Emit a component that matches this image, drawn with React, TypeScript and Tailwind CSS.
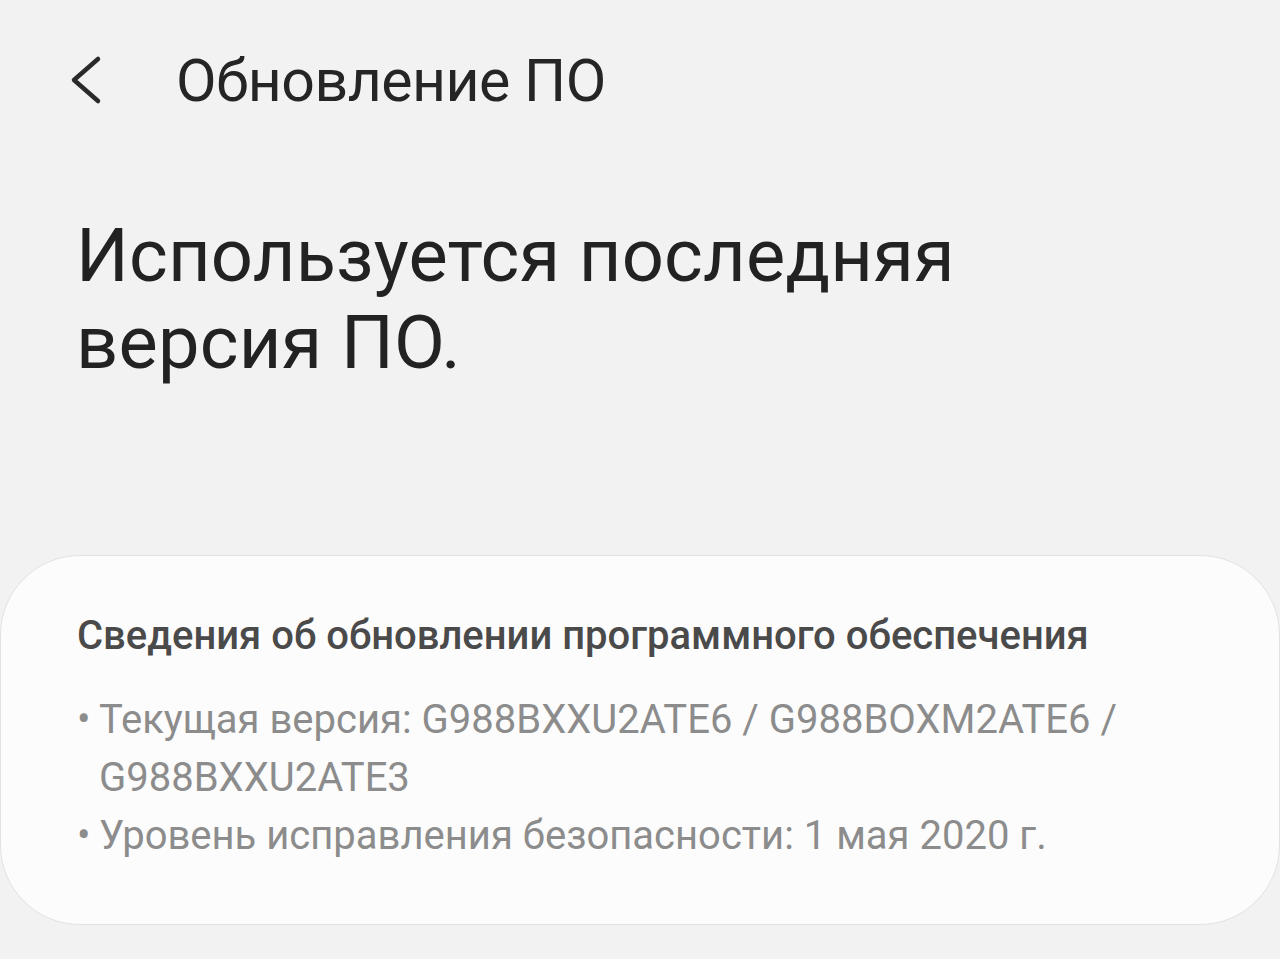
import React from "react";

// Software update screen (One UI style)
const App: React.FC = () => {
  return (
    <div
      className="w-[1280px] h-[959px] bg-[#f2f2f2] overflow-hidden flex flex-col"
      style={{ fontFamily: "Roboto, 'Noto Sans', sans-serif" }}
    >
      <div className="flex items-center h-[80px] mt-[40px] pl-[68px]">
        <svg width="34" height="50" viewBox="0 0 34 50" className="shrink-0">
          <path d="M30 4 L6 25 L30 46" fill="none" stroke="#2a2a2a" strokeWidth="4.5" strokeLinecap="round" strokeLinejoin="round" />
        </svg>
        <span className="ml-[74px] text-[59px] leading-none text-[#252525] tracking-[-0.5px]">Обновление ПО</span>
      </div>

      <h1 className="mt-[92px] pl-[76px] text-[74px] leading-[87px] text-[#222222] tracking-[0.2px]">
        Используется последняя
        <br />
        версия ПО.
      </h1>

      <div className="mt-[169px] mx-0 h-[370px] rounded-[80px] bg-[#fcfcfc] border border-[#e2e2e2] pl-[76px] pr-[60px] pt-[58px]">
        <div className="text-[40px] font-medium text-[#4a4a4a] leading-[44px]">
          Сведения об обновлении программного обеспечения
        </div>
        <ul className="mt-[33px] text-[40px] text-[#8c8c8c] leading-[58px]">
          <li className="flex">
            <span className="w-[22px] shrink-0">•</span>
            <span>Текущая версия: G988BXXU2ATE6 / G988BOXM2ATE6 / G988BXXU2ATE3</span>
          </li>
          <li className="flex">
            <span className="w-[22px] shrink-0">•</span>
            <span>Уровень исправления безопасности: 1 мая 2020 г.</span>
          </li>
        </ul>
      </div>
    </div>
  );
};

export default App;
